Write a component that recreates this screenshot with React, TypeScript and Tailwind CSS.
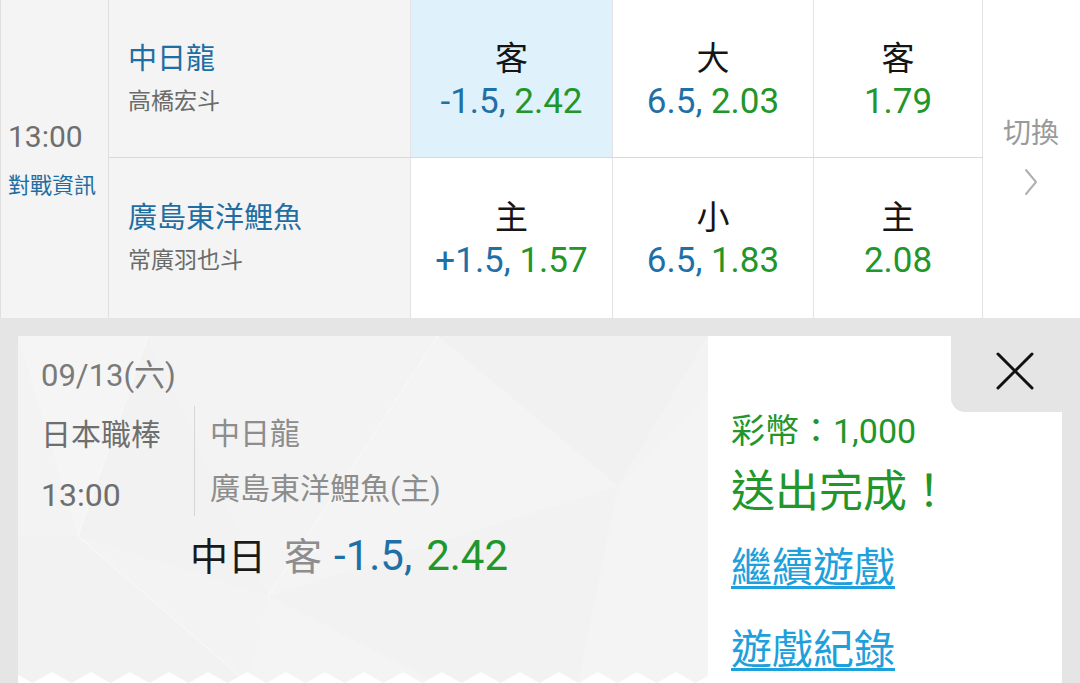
import React from 'react';

interface OddsCellProps {
    label: string;
    line?: string;
    price: string;
    active?: boolean;
}

const OddsCell: React.FC<OddsCellProps> = ({ label, line, price, active }) => (
    <div
        className={`flex flex-col items-center justify-center border-r border-[#e3e3e3] pt-[6px] ${
            active ? 'bg-[#dff2fc]' : 'bg-white'
        }`}
    >
        <span className="text-[33px] leading-[40px] text-[#151515]">{label}</span>
        <span className="text-[35px] leading-[46px] whitespace-pre">
            {line && <span className="text-[#1f70a6]">{line}, </span>}
            <span className="text-[#22962a]">{price}</span>
        </span>
    </div>
);

interface TeamCellProps {
    team: string;
    pitcher: string;
}

const TeamCell: React.FC<TeamCellProps> = ({ team, pitcher }) => (
    <div className="flex flex-col justify-center border-r border-[#e3e3e3] bg-[#f4f4f4] pl-[19px]">
        <span className="text-[29px] leading-[36px] text-[#1f6ea3]">{team}</span>
        <span className="mt-[10px] text-[23px] leading-[30px] text-[#6b6b6b]">{pitcher}</span>
    </div>
);

// faint low-poly backdrop behind the bet ticket
const PanelPattern = () => (
    <svg className="absolute inset-0 h-full w-full" viewBox="0 0 690 347" preserveAspectRatio="none">
        <polygon points="0,0 130,0 60,200" fill="#f5f5f5" />
        <polygon points="60,200 130,0 250,260" fill="#f2f2f2" />
        <polygon points="250,260 420,0 600,150" fill="#f4f4f4" />
        <polygon points="420,0 690,0 600,150" fill="#f1f1f1" />
        <polygon points="600,150 690,60 690,347 560,347" fill="#f4f4f4" />
        <polygon points="0,200 60,200 230,347 0,347" fill="#f2f2f2" />
        <polygon points="230,347 250,260 420,347" fill="#f4f4f4" />
        <polygon points="250,260 600,150 560,347 420,347" fill="#f2f2f2" />
        <line x1="130" y1="0" x2="60" y2="200" stroke="#f7f7f7" strokeWidth="1.5" />
        <line x1="250" y1="260" x2="420" y2="0" stroke="#f7f7f7" strokeWidth="1.5" />
        <line x1="60" y1="200" x2="230" y2="347" stroke="#f7f7f7" strokeWidth="1.5" />
    </svg>
);

const Zigzag = () => (
    <svg className="absolute bottom-0 left-0 h-[11px] w-full">
        <defs>
            <pattern id="zig" x="14.5" y="0" width="39" height="11" patternUnits="userSpaceOnUse">
                <path d="M0 11 L19.5 0 L39 11 Z" fill="#ffffff" />
            </pattern>
        </defs>
        <rect width="100%" height="11" fill="url(#zig)" />
    </svg>
);

const App: React.FC = () => {
    return (
        <div className="h-[683px] w-[1080px] overflow-hidden bg-[#e5e5e5] font-['Roboto','Noto_Sans_CJK_TC',sans-serif]">
            <section className="flex h-[318px] bg-white">
                <div className="flex w-[109px] shrink-0 flex-col justify-center border-r border-l border-[#dfdfdf] bg-[#f4f4f4] pl-[7px]">
                    <span className="text-[30px] leading-[40px] text-[#6e6e6e]">13:00</span>
                    <span className="mt-[14px] text-[22px] leading-[30px] text-[#1f6ea3]">對戰資訊</span>
                </div>

                <div className="flex flex-1 flex-col">
                    <div className="grid h-[158px] grid-cols-[302px_202px_201px_169px] border-b border-[#d4dbe0]">
                        <TeamCell team="中日龍" pitcher="高橋宏斗" />
                        <OddsCell label="客" line="-1.5" price="2.42" active />
                        <OddsCell label="大" line="6.5" price="2.03" />
                        <OddsCell label="客" price="1.79" />
                    </div>
                    <div className="grid h-[160px] grid-cols-[302px_202px_201px_169px]">
                        <TeamCell team="廣島東洋鯉魚" pitcher="常廣羽也斗" />
                        <OddsCell label="主" line="+1.5" price="1.57" />
                        <OddsCell label="小" line="6.5" price="1.83" />
                        <OddsCell label="主" price="2.08" />
                    </div>
                </div>

                <div className="flex w-[97px] shrink-0 flex-col items-center justify-center bg-white pb-[6px] pr-[1px]">
                    <span className="text-[28px] leading-[36px] text-[#9a9a9a]">切換</span>
                    <svg className="mt-[16px]" width="14" height="28" viewBox="0 0 14 28" fill="none">
                        <path d="M2 2 L12 14 L2 26" stroke="#b0b0b0" strokeWidth="2" strokeLinecap="round" strokeLinejoin="round" />
                    </svg>
                </div>
            </section>

            <div className="flex h-[365px] px-[18px] pt-[18px]">
                <div className="relative w-[690px] shrink-0 overflow-hidden bg-[#f3f3f3]">
                    <PanelPattern />
                    <div className="relative pl-[23px] pt-[20px]">
                        <div className="text-[31px] leading-[40px] text-[#7a7a7a]">09/13(六)</div>
                        <div className="mt-[9px] flex items-start">
                            <div className="flex w-[153px] flex-col text-[30px] leading-[60px] text-[#6e6e6e]">
                                <span>日本職棒</span>
                                <span className="text-[32px]">13:00</span>
                            </div>
                            <div className="mt-px flex flex-col border-l border-[#d6d6d6] pl-[15px] text-[30px] leading-[55px] text-[#8d8d8d]">
                                <span>中日龍</span>
                                <span>廣島東洋鯉魚(主)</span>
                            </div>
                        </div>
                        <div className="ml-[149px] mt-[7px] flex items-baseline text-[38px] leading-[48px]">
                            <span className="text-[#1a1a1a]">中日</span>
                            <span className="ml-[18px] text-[#8d8d8d]">客</span>
                            <span className="ml-[12px] text-[42px] text-[#1f70a6]">-1.5,</span>
                            <span className="ml-[14px] text-[42px] text-[#22962a]">2.42</span>
                        </div>
                    </div>
                    <Zigzag />
                </div>

                <div className="flex flex-1 flex-col bg-white">
                    <div className="flex justify-end">
                        <button className="flex h-[76px] w-[111px] items-center justify-center rounded-bl-[14px] bg-[#e5e5e5] pb-[6px] pl-[17px]">
                            <svg width="38" height="38" viewBox="0 0 38 38" fill="none">
                                <path d="M2 2 L36 36 M36 2 L2 36" stroke="#111111" strokeWidth="3" strokeLinecap="round" />
                            </svg>
                        </button>
                    </div>
                    <div className="flex flex-col items-start pl-[23px]">
                        <span className="text-[34px] leading-[38px] text-[#22962a]">彩幣：1,000</span>
                        <span className="mt-[16px] text-[44px] leading-[52px] text-[#22962a]">送出完成！</span>
                        <a className="mt-[25px] text-[41px] leading-[50px] text-[#1ea0dc] underline decoration-[3px] underline-offset-[4px]">
                            繼續遊戲
                        </a>
                        <a className="mt-[32px] text-[41px] leading-[50px] text-[#1ea0dc] underline decoration-[3px] underline-offset-[4px]">
                            遊戲紀錄
                        </a>
                    </div>
                </div>
            </div>
        </div>
    );
};

export default App;
